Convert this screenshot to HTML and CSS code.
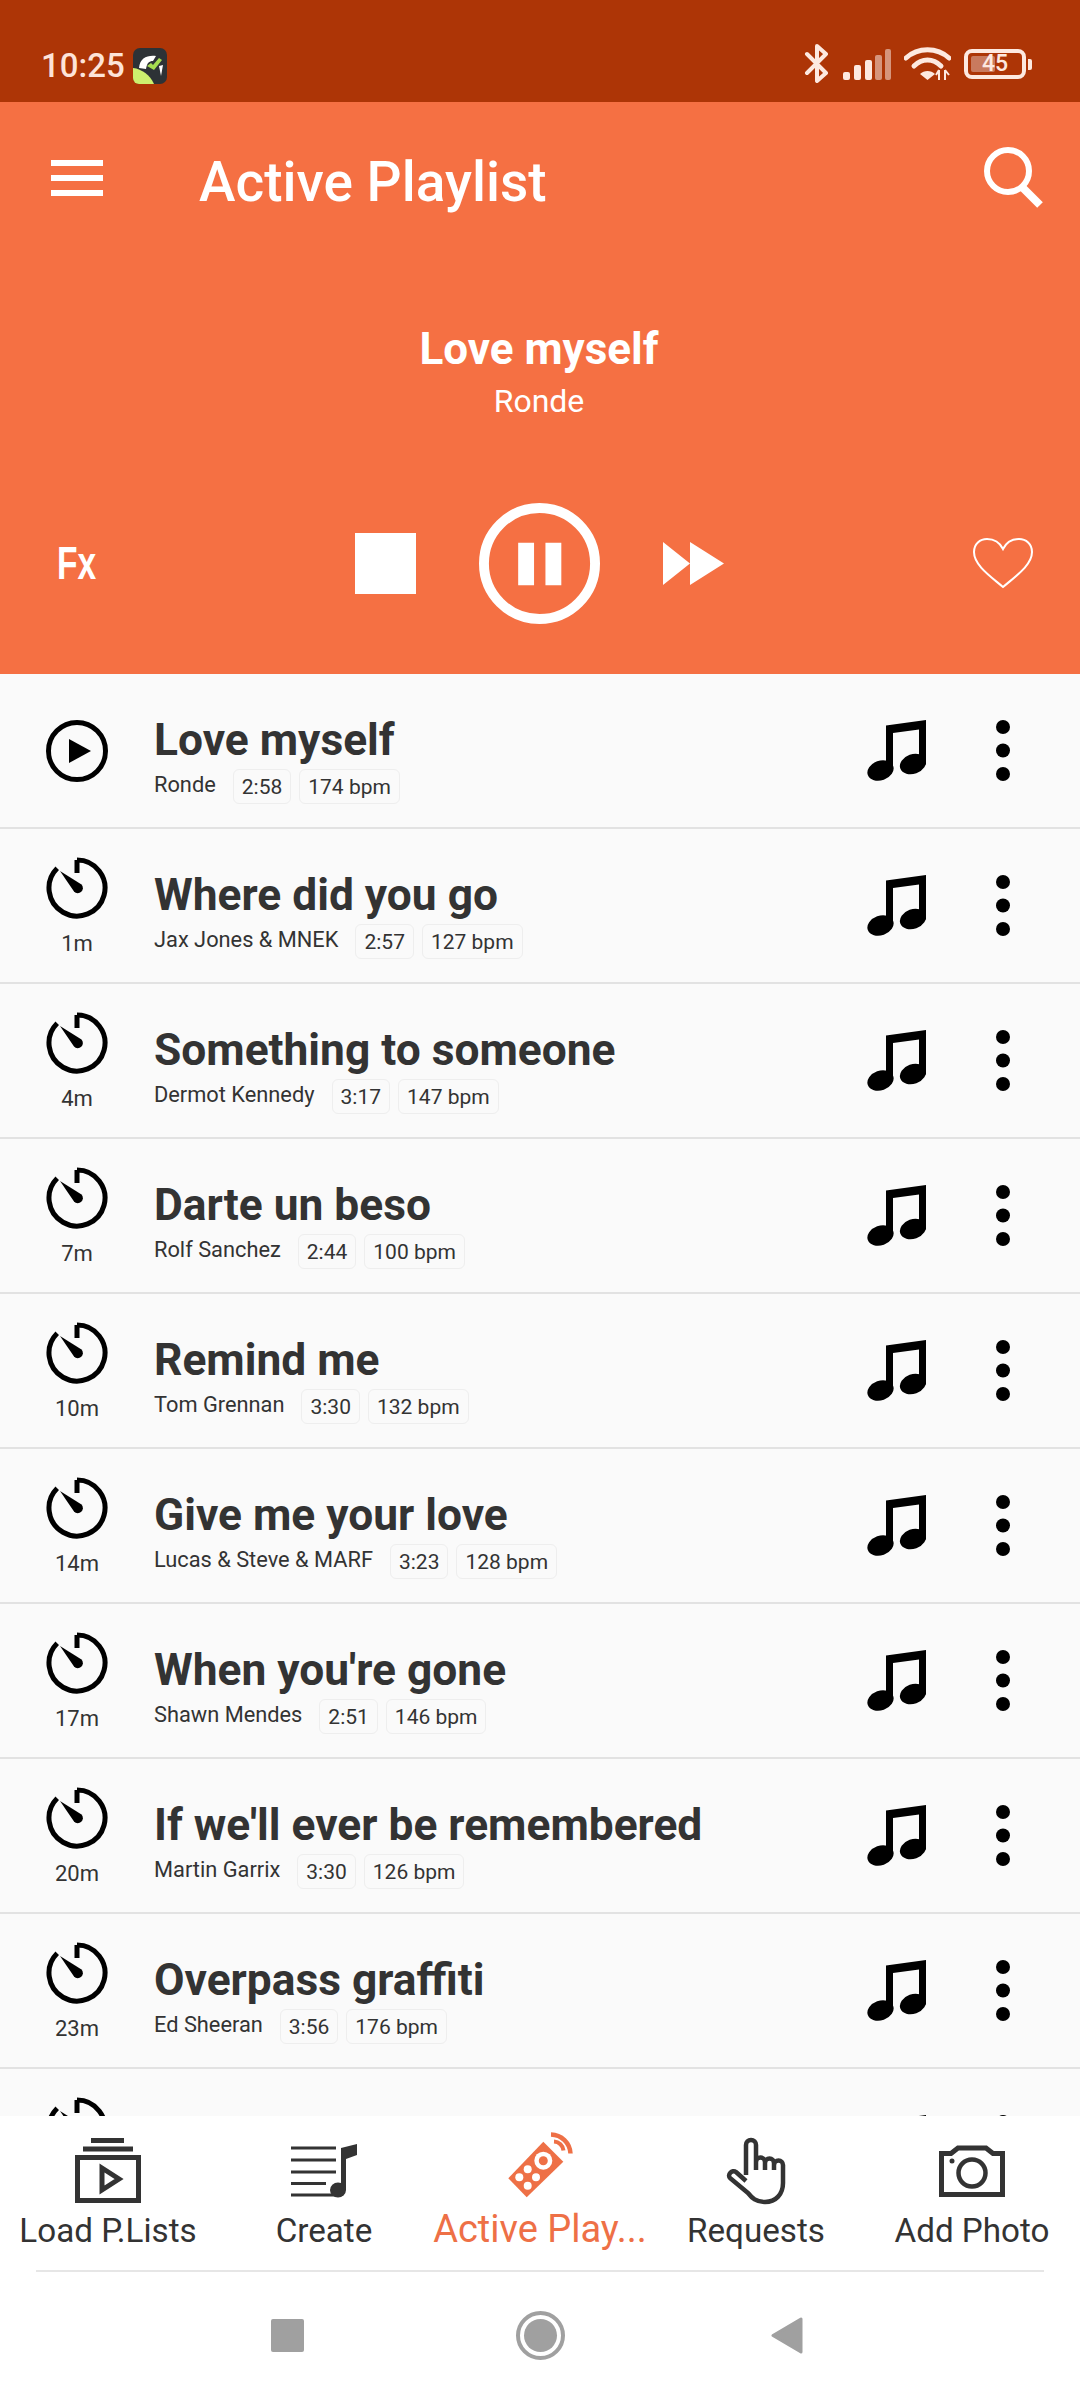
FILE: index.html
```html
<!DOCTYPE html>
<html lang="en">
<head>
<meta charset="utf-8">
<title>Active Playlist</title>
<link rel="stylesheet" href="styles.css">
</head>
<body>
<svg class="sprites" width="0" height="0" aria-hidden="true">
  <symbol id="timer" viewBox="0 0 62 62">
    <path d="M31 3A28 28 0 1 1 11.200 11.200" fill="none" stroke="#000" stroke-width="5"/>
    <path d="M31 3v13" fill="none" stroke="#000" stroke-width="5"/>
    <path d="M14 14L35.500 27.500a5 5 0 1 1-7.500 7z" fill="#000"/>
  </symbol>
  <symbol id="note" viewBox="0 0 59 61">
    <path d="M19 5.500L59 0v44a13 9.500-20 0 1-7 5V9.500L26 13v38h-7z" fill="#000"/>
    <ellipse cx="13.500" cy="50.500" rx="13.500" ry="9.800" transform="rotate(-20 13.500 50.500)" fill="#000"/>
    <ellipse cx="46" cy="44" rx="13.500" ry="9.800" transform="rotate(-20 46 44)" fill="#000"/>
  </symbol>
  <symbol id="dots" viewBox="0 0 14 61">
    <circle cx="7" cy="7" r="7" fill="#000"/>
    <circle cx="7" cy="30.500" r="7" fill="#000"/>
    <circle cx="7" cy="54" r="7" fill="#000"/>
  </symbol>
</svg>
<div class="phone">
  <div class="status">
    <div class="status-left">
      <span class="clock">10:25</span>
      <svg class="app-badge" viewBox="0 0 34 36">
        <rect width="34" height="36" rx="7" fill="#2d3236"/>
        <path d="M0 20c9 1 17 7 21 16H6a6 6 0 0 1-6-6z" fill="#cdf06e"/>
        <path d="M6 20C7 10 14 7 23 8l-3 5c-4 0-6 2-7 8z" fill="#fff"/>
        <path d="M14 18l4-3 2 2 6-7 3 2-8 10z" fill="#a5dc50"/>
        <path d="M26 18l2 10 2-11z" fill="#fff"/>
      </svg>
    </div>
    <div class="status-right">
      <svg class="st-bt" viewBox="0 0 26 39"><path d="M3 10l19 19-9 8V2l9 8L3 29" fill="none" stroke="#fde9e0" stroke-width="4" stroke-linecap="round" stroke-linejoin="round"/></svg>
      <svg class="st-signal" viewBox="0 0 48 31">
        <rect x="0" y="23" width="7" height="8" rx="2" fill="#fde9e0"/>
        <rect x="11" y="16" width="7" height="15" rx="2" fill="#fde9e0"/>
        <rect x="22" y="11" width="7" height="20" rx="2" fill="#fde9e0"/>
        <rect x="32" y="6" width="7" height="25" rx="2" fill="#d6957c"/>
        <rect x="42" y="0" width="6" height="31" rx="2" fill="#d6957c"/>
      </svg>
      <svg class="st-wifi" viewBox="0 0 47 34">
        <path d="M2 11C14 0 33 0 45 11" fill="none" stroke="#fde9e0" stroke-width="5" stroke-linecap="round"/>
        <path d="M10 19C18 11 29 11 37 19" fill="none" stroke="#fde9e0" stroke-width="5" stroke-linecap="round"/>
        <path d="M16 27c4-4 11-4 15 0l-7.500 6z" fill="#fde9e0"/>
        <path d="M35 23v10M41 23v10M32 28l3-5M41 23l4 5" stroke="#fde9e0" stroke-width="2" fill="none"/>
      </svg>
      <div class="battery-wrap">
        <div class="battery"><span class="battery-fill"></span><span class="battery-num">45</span></div>
        <span class="battery-tip"></span>
      </div>
    </div>
  </div>
  <header class="player">
    <div class="toolbar">
      <svg class="menu-icon" viewBox="0 0 52 36"><path d="M0 0h52v6H0zM0 15h52v6H0zM0 30h52v6H0z" fill="#fff"/></svg>
      <h1 class="screen-title">Active Playlist</h1>
      <svg class="search-icon" viewBox="0 0 60 62"><circle cx="24" cy="24" r="21" fill="none" stroke="#fff" stroke-width="6"/><path d="M39 41l17 17" stroke="#fff" stroke-width="8" fill="none"/></svg>
    </div>
    <div class="now">
      <div class="now-title">Love myself</div>
      <div class="now-artist">Ronde</div>
    </div>
    <div class="controls">
      <span class="fx">Fx</span>
      <div class="transport">
        <span class="stop"></span>
        <svg class="pause" viewBox="0 0 122 122"><circle cx="61" cy="61" r="56" fill="none" stroke="#fff" stroke-width="10"/><path d="M39.500 40h16v43h-16zM67 40h16v43H67z" fill="#fff"/></svg>
        <svg class="forward" viewBox="0 0 61 43"><path d="M0 0l27 21.500L0 43zM27 0l34 21.500L27 43z" fill="#fff"/></svg>
      </div>
      <svg class="heart" viewBox="0 0 62 52"><path d="M31 50C18 39 2 28 2 15 2 7 8 2 15 2c7 0 13 4 16 10 3-6 9-10 16-10 7 0 13 5 13 13 0 13-16 24-29 35z" fill="none" stroke="#fff" stroke-width="2"/></svg>
    </div>
  </header>
  <main class="list">
    <div class="row">
      <div class="when"><svg class="play-icon" viewBox="0 0 62 62"><circle cx="31" cy="31" r="28.500" fill="none" stroke="#000" stroke-width="5"/><path d="M23 19l22 12-22 12z" fill="#000"/></svg></div>
      <div class="song"><div class="song-title">Love myself</div><div class="meta"><span class="artist">Ronde</span><span class="tag">2:58</span><span class="tag">174 bpm</span></div></div>
      <svg class="note"><use href="#note"/></svg><svg class="dots"><use href="#dots"/></svg>
    </div>
    <div class="row">
      <div class="when"><svg class="timer"><use href="#timer"/></svg><span class="mins">1m</span></div>
      <div class="song"><div class="song-title">Where did you go</div><div class="meta"><span class="artist">Jax Jones &amp; MNEK</span><span class="tag">2:57</span><span class="tag">127 bpm</span></div></div>
      <svg class="note"><use href="#note"/></svg><svg class="dots"><use href="#dots"/></svg>
    </div>
    <div class="row">
      <div class="when"><svg class="timer"><use href="#timer"/></svg><span class="mins">4m</span></div>
      <div class="song"><div class="song-title">Something to someone</div><div class="meta"><span class="artist">Dermot Kennedy</span><span class="tag">3:17</span><span class="tag">147 bpm</span></div></div>
      <svg class="note"><use href="#note"/></svg><svg class="dots"><use href="#dots"/></svg>
    </div>
    <div class="row">
      <div class="when"><svg class="timer"><use href="#timer"/></svg><span class="mins">7m</span></div>
      <div class="song"><div class="song-title">Darte un beso</div><div class="meta"><span class="artist">Rolf Sanchez</span><span class="tag">2:44</span><span class="tag">100 bpm</span></div></div>
      <svg class="note"><use href="#note"/></svg><svg class="dots"><use href="#dots"/></svg>
    </div>
    <div class="row">
      <div class="when"><svg class="timer"><use href="#timer"/></svg><span class="mins">10m</span></div>
      <div class="song"><div class="song-title">Remind me</div><div class="meta"><span class="artist">Tom Grennan</span><span class="tag">3:30</span><span class="tag">132 bpm</span></div></div>
      <svg class="note"><use href="#note"/></svg><svg class="dots"><use href="#dots"/></svg>
    </div>
    <div class="row">
      <div class="when"><svg class="timer"><use href="#timer"/></svg><span class="mins">14m</span></div>
      <div class="song"><div class="song-title">Give me your love</div><div class="meta"><span class="artist">Lucas &amp; Steve &amp; MARF</span><span class="tag">3:23</span><span class="tag">128 bpm</span></div></div>
      <svg class="note"><use href="#note"/></svg><svg class="dots"><use href="#dots"/></svg>
    </div>
    <div class="row">
      <div class="when"><svg class="timer"><use href="#timer"/></svg><span class="mins">17m</span></div>
      <div class="song"><div class="song-title">When you're gone</div><div class="meta"><span class="artist">Shawn Mendes</span><span class="tag">2:51</span><span class="tag">146 bpm</span></div></div>
      <svg class="note"><use href="#note"/></svg><svg class="dots"><use href="#dots"/></svg>
    </div>
    <div class="row">
      <div class="when"><svg class="timer"><use href="#timer"/></svg><span class="mins">20m</span></div>
      <div class="song"><div class="song-title">If we'll ever be remembered</div><div class="meta"><span class="artist">Martin Garrix</span><span class="tag">3:30</span><span class="tag">126 bpm</span></div></div>
      <svg class="note"><use href="#note"/></svg><svg class="dots"><use href="#dots"/></svg>
    </div>
    <div class="row">
      <div class="when"><svg class="timer"><use href="#timer"/></svg><span class="mins">23m</span></div>
      <div class="song"><div class="song-title">Overpass graffiti</div><div class="meta"><span class="artist">Ed Sheeran</span><span class="tag">3:56</span><span class="tag">176 bpm</span></div></div>
      <svg class="note"><use href="#note"/></svg><svg class="dots"><use href="#dots"/></svg>
    </div>
    <div class="row">
      <div class="when"><svg class="timer"><use href="#timer"/></svg><span class="mins">&nbsp;</span></div>
      <div class="song"></div>
      <svg class="note"><use href="#note"/></svg><svg class="dots"><use href="#dots"/></svg>
    </div>
  </main>
  <nav class="tabs">
    <div class="tab">
      <svg class="tab-icon" viewBox="0 0 66 66"><path d="M16 0h33v5H16zM8 8.500h50v5H8z" fill="#333"/><path d="M2.500 19.500h61v43h-61z" fill="none" stroke="#333" stroke-width="5"/><path d="M27 30l17 11-17 11z" fill="none" stroke="#333" stroke-width="5"/></svg>
      <span class="tab-label">Load P.Lists</span>
    </div>
    <div class="tab">
      <svg class="tab-icon" viewBox="0 0 66 66"><path d="M0 8.500h45v3H0zM0 20.500h45v3H0zM0 32.500h45v3H0zM0 44h35v3H0zM0 55.500h45v3H0z" fill="#333"/><path d="M50 10l16-4v11l-11 4v31h-5z" fill="#333"/><ellipse cx="47" cy="52" rx="8" ry="7.500" fill="#333"/></svg>
      <span class="tab-label">Create</span>
    </div>
    <div class="tab tab-active">
      <svg class="tab-icon" viewBox="0 0 66 66"><path d="M36.300 3.700L56.300 23.700 19.700 59.300 1.300 40.300z" fill="#ee7046"/><circle cx="36.300" cy="22.700" r="9" fill="#fff"/><circle cx="36.300" cy="22.700" r="4.500" fill="#ee7046"/><g fill="#fff"><circle cx="20.700" cy="31.300" r="4"/><circle cx="12.300" cy="39.300" r="4"/><circle cx="29" cy="39.300" r="4"/><circle cx="20.700" cy="47.700" r="4"/></g><path d="M44 -3.500A20 20 0 0 1 63.500 15.500" fill="none" stroke="#ee7046" stroke-width="4.500"/><path d="M47 3.500A10 10 0 0 1 56.500 12.500" fill="none" stroke="#ee7046" stroke-width="4"/></svg>
      <span class="tab-label">Active Play...</span>
    </div>
    <div class="tab">
      <svg class="tab-icon" viewBox="0 0 66 66"><path d="M23 37V7a5 5 0 0 1 10 0v25M33 24a4.500 4.500 0 0 1 9 0v8M42 25a4.500 4.500 0 0 1 9 0v7M51 27a4.500 4.500 0 0 1 9 0v18c0 11-7 19-18 19-9 0-13-4-17-9L7 40c-3-3 2-9 6-6l10 9" fill="none" stroke="#333" stroke-width="4.500" stroke-linejoin="round"/></svg>
      <span class="tab-label">Requests</span>
    </div>
    <div class="tab">
      <svg class="tab-icon" viewBox="0 0 66 66"><path d="M2.500 15.500H12l7-5.500h28l7 5.500h9.500v41h-61z" fill="none" stroke="#333" stroke-width="5"/><circle cx="33" cy="35" r="13.500" fill="none" stroke="#333" stroke-width="4.500"/><circle cx="13" cy="23" r="2.500" fill="#333"/></svg>
      <span class="tab-label">Add Photo</span>
    </div>
  </nav>
  <div class="sysnav">
    <span class="sys-square"></span>
    <span class="sys-home"><span class="sys-home-dot"></span></span>
    <svg class="sys-back" viewBox="0 0 32 37"><path d="M30 2v33L2 18.500z" fill="#a0a0a0" stroke="#a0a0a0" stroke-width="3" stroke-linejoin="round"/></svg>
  </div>
</div>
</body>
</html>
```

FILE: styles.css
```css
* { box-sizing: border-box; }
html, body { margin: 0; padding: 0; }
body { font-family: Roboto, "Noto Sans", sans-serif; background: #fff; }
.sprites { position: absolute; }
.phone { width: 1080px; height: 2400px; display: flex; flex-direction: column; overflow: hidden; }

.status { height: 102px; flex: none; background: #ad3506; display: flex; justify-content: space-between; align-items: flex-start; padding: 48px 48px 0 41px; }
.status-left { display: flex; align-items: center; gap: 8px; }
.clock { color: #fde3d8; font-size: 33px; font-weight: 500; line-height: 36px; }
.app-badge { width: 34px; height: 36px; display: block; }
.status-right { display: flex; gap: 13px; margin-top: -4px; align-items: flex-start; }
.st-bt { width: 26px; height: 39px; }
.st-signal { width: 48px; height: 31px; margin-top: 5px; }
.st-wifi { width: 47px; height: 34px; margin-top: 3px; }
.battery-wrap { display: flex; align-items: center; gap: 2px; margin-top: 5px; }
.battery { width: 62px; height: 30px; border: 4px solid #fde9e0; border-radius: 8px; position: relative; display: flex; align-items: center; justify-content: center; }
.battery-fill { position: absolute; left: 3px; top: 3px; bottom: 3px; width: 24px; background: #c97a5e; border-radius: 2px; }
.battery-num { position: relative; color: #fde9e0; font-size: 23px; font-weight: 500; line-height: 22px; }
.battery-tip { width: 4px; height: 11px; background: #fde9e0; border-radius: 0 2px 2px 0; }

.player { height: 572px; flex: none; background: #f57043; display: flex; flex-direction: column; color: #fff; }
.toolbar { height: 154px; display: flex; align-items: center; padding: 0 0 0 51px; }
.menu-icon { width: 52px; height: 36px; flex: none; margin-bottom: 3px; }
.screen-title { margin: 5px 0 0 96px; font-size: 55px; font-weight: 500; line-height: 60px; flex: 1; }
.search-icon { width: 60px; height: 62px; flex: none; margin: 0 36px 2px 0; }
.now { margin-top: 65px; margin-right: 2px; display: flex; flex-direction: column; align-items: center; }
.now-title { font-size: 44px; font-weight: 700; line-height: 56px; }
.now-artist { font-size: 32px; line-height: 40px; color: #fff; margin-top: 4px; }
.controls { margin-top: 81px; height: 122px; display: flex; align-items: center; justify-content: space-between; padding: 0 46px 0 57px; position: relative; }
.fx { font-family: "Liberation Sans", sans-serif; font-weight: 700; font-size: 46px; line-height: 46px; transform: scaleX(0.73); transform-origin: left center; }
.transport { position: absolute; left: 355px; top: 0; height: 122px; display: flex; align-items: center; }
.stop { width: 61px; height: 61px; background: #fff; display: block; }
.pause { width: 121px; height: 121px; margin-left: 63px; }
.forward { width: 61px; height: 43px; margin-left: 63px; }
.heart { width: 62px; height: 52px; }

.list { flex: 1; min-height: 0; overflow: hidden; background: #fafafa; }
.row { height: 155px; border-bottom: 2px solid #e2e2e2; display: flex; align-items: center; }
.when { width: 154px; flex: none; display: flex; flex-direction: column; align-items: center; }
.play-icon, .timer { width: 62px; height: 62px; display: block; }
.mins { font-size: 22px; line-height: 26px; color: #333; margin-top: 12px; margin-bottom: -3px; }
.song { flex: 1; min-width: 0; color: #333; padding-top: 16px; }
.song-title { font-size: 44.300px; font-weight: 700; line-height: 52px; }
.meta { display: flex; align-items: flex-start; margin-top: 2px; }
.artist { font-size: 21.800px; line-height: 30px; margin-right: 17px; padding-top: 2px; }
.tag { font-size: 21px; line-height: 33px; height: 35px; border: 1px solid #eee; border-radius: 6px; padding: 1px 8px 0; margin-right: 8px; margin-top: 1px; color: #333; }
.note { width: 59px; height: 61px; flex: none; margin-right: 70px; }
.dots { width: 14px; height: 61px; flex: none; margin-right: 70px; }

.tabs { height: 154px; flex: none; background: #fff; display: flex; position: relative; z-index: 1; }
.tab { width: 216px; display: flex; flex-direction: column; align-items: center; padding-top: 22px; color: #333; }
.tab-icon { width: 66px; height: 66px; display: block; overflow: visible; }
.tab-label { font-size: 33.200px; line-height: 44px; margin-top: 5px; white-space: nowrap; }
.tab-active { color: #ee7046; }
.tab-active .tab-label { font-size: 38px; margin-top: 3px; }

.sysnav { height: 130px; flex: none; margin: 0 36px; border-top: 2px solid #e6e6e6; position: relative; }
.sys-square { position: absolute; left: 235px; top: 47px; width: 33px; height: 33px; background: #a0a0a0; border-radius: 2px; }
.sys-home { position: absolute; left: 480px; top: 39px; width: 49px; height: 49px; border: 4px solid #a0a0a0; border-radius: 50%; display: flex; align-items: center; justify-content: center; }
.sys-home-dot { width: 33px; height: 33px; background: #a0a0a0; border-radius: 50%; }
.sys-back { position: absolute; left: 735px; top: 45px; width: 32px; height: 37px; }
```
